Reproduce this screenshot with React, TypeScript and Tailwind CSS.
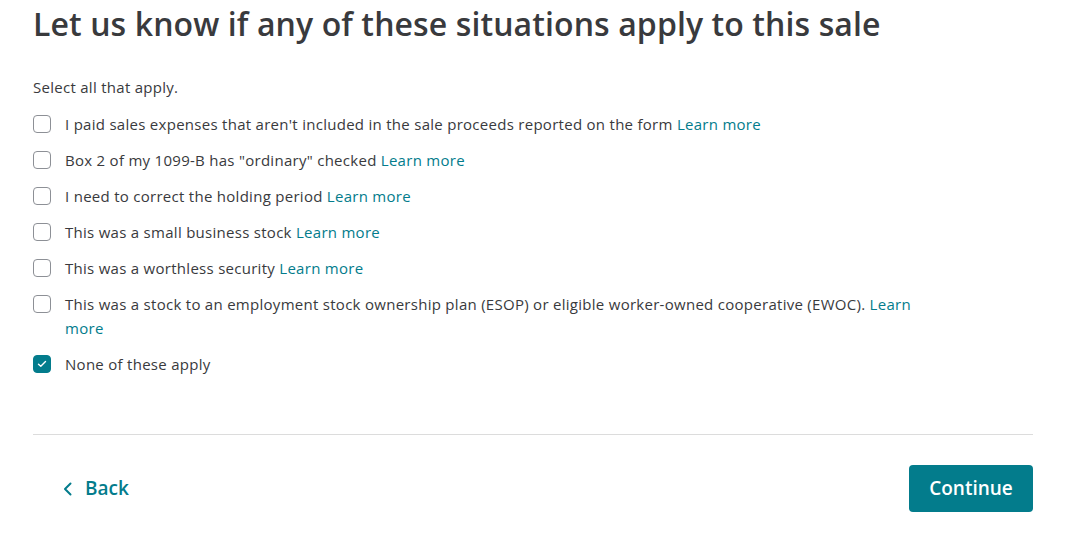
import { useState } from "react";

const options = [
  "I paid sales expenses that aren't included in the sale proceeds reported on the form",
  'Box 2 of my 1099-B has "ordinary" checked',
  "I need to correct the holding period",
  "This was a small business stock",
  "This was a worthless security",
  "This was a stock to an employment stock ownership plan (ESOP) or eligible worker-owned cooperative (EWOC).",
];

function Checkbox({ checked }: { checked: boolean }) {
  return (
    <span
      className={
        "mt-[3px] flex h-[18px] w-[18px] shrink-0 items-center justify-center rounded-[4px] border " +
        (checked ? "border-[#037c8c] bg-[#037c8c]" : "border-[#8d9096] bg-white")
      }
    >
      {checked && (
        <svg width="10" height="8" viewBox="0 0 10 8" fill="none">
          <path d="M1.5 4.2 3.8 6.3 8.5 1.6" stroke="white" strokeWidth="1.4" strokeLinecap="round" strokeLinejoin="round" />
        </svg>
      )}
    </span>
  );
}

export default function App() {
  const [none, setNone] = useState(true);
  const [picked, setPicked] = useState<boolean[]>(options.map(() => false));

  return (
    <div className="min-h-[543px] bg-white px-[33px] text-[#393a3d]" style={{ fontFamily: "'Open Sans', 'Liberation Sans', sans-serif" }}>
      <h1 className="pt-[2px] text-[32px] leading-[44px] font-semibold tracking-[0.1px]">
        Let us know if any of these situations apply to this sale
      </h1>

      <p className="mt-[29px] text-[15px] leading-[24px] tracking-[0.28px]">Select all that apply.</p>

      <div className="mt-[13px] flex w-[900px] flex-col gap-[12px] text-[15px] leading-[24px] tracking-[0.28px]">
        {options.map((text, i) => (
          <label key={i} className="flex cursor-pointer gap-[14px]">
            <input
              type="checkbox"
              className="hidden"
              checked={picked[i]}
              onChange={() => {
                const next = [...picked];
                next[i] = !next[i];
                setPicked(next);
                setNone(false);
              }}
            />
            <Checkbox checked={picked[i]} />
            <span>
              {text} <a className="text-[#037c8c]">Learn more</a>
            </span>
          </label>
        ))}
        <label className="flex cursor-pointer gap-[14px]">
          <input
            type="checkbox"
            className="hidden"
            checked={none}
            onChange={() => {
              setNone(!none);
              setPicked(options.map(() => false));
            }}
          />
          <Checkbox checked={none} />
          <span>None of these apply</span>
        </label>
      </div>

      <div className="mt-[58px] w-[1000px] border-t border-[#dcdcdc]" />

      <div className="mt-[30px] flex w-[1000px] items-center justify-between">
        <button className="ml-[30px] flex items-center gap-[12px] text-[19px] font-semibold text-[#037c8c]">
          <svg width="10" height="14" viewBox="0 0 10 14" fill="none">
            <path d="M7.5 1.5 2 7l5.5 5.5" stroke="currentColor" strokeWidth="2" strokeLinecap="round" strokeLinejoin="round" />
          </svg>
          Back
        </button>
        <button className="h-[47px] w-[124px] rounded-[4px] bg-[#037c8c] text-[19px] font-semibold text-white">Continue</button>
      </div>
    </div>
  );
}
